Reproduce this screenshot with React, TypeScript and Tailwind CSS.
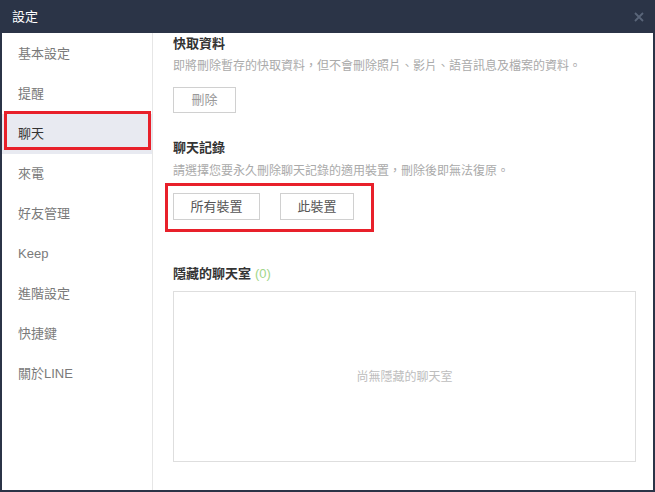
import React from "react";

const menu = ["基本設定", "提醒", "聊天", "來電", "好友管理", "Keep", "進階設定", "快捷鍵", "關於LINE"];

export default function App() {
  const selected = "聊天";

  return (
    <div
      className="relative w-[655px] h-[492px] bg-[#2b3447] flex flex-col overflow-hidden"
      style={{ fontFamily: '"Liberation Sans", "Noto Sans CJK TC", sans-serif' }}
    >
      {/* 標題列 */}
      <div className="h-[33px] flex items-center justify-between pl-3 pr-[10px] shrink-0">
        <span className="text-[13px] text-white">設定</span>
        <svg width="10" height="10" viewBox="0 0 10 10" className="mr-[1px]">
          <path d="M1 1 L9 9 M9 1 L1 9" stroke="#5a6579" strokeWidth="1.8" />
        </svg>
      </div>

      {/* 本體 */}
      <div className="flex-1 flex mx-[2px] mb-[2px] bg-white min-h-0">
        {/* 左側選單 */}
        <div className="w-[151px] shrink-0 border-r border-[#e6e6e6] flex flex-col pt-[1px]">
          {menu.map((item) => (
            <div
              key={item}
              className={`h-10 flex items-center pl-4 text-[13px] ${
                item === selected ? "bg-[#e8eaf1] text-[#333]" : "text-[#7a7a7a]"
              }`}
            >
              {item}
            </div>
          ))}
        </div>

        {/* 右側內容 */}
        <div className="flex-1 pl-5 pr-[17px] flex flex-col">
          <div className="h-5 mt-[1px] flex items-center text-[13px] font-bold text-[#333]">快取資料</div>
          <div className="h-[18px] mt-[3px] flex items-center text-[12px] text-[#aaaaaa]">
            即將刪除暫存的快取資料，但不會刪除照片、影片、語音訊息及檔案的資料。
          </div>
          <button className="mt-3 w-[63px] h-[26px] border border-[#d0d0d0] bg-white text-[13px] text-[#999]">
            刪除
          </button>

          <div className="h-5 mt-[25px] flex items-center text-[13px] font-bold text-[#333]">聊天記錄</div>
          <div className="h-[18px] mt-1 flex items-center text-[12px] text-[#aaaaaa]">
            請選擇您要永久刪除聊天記錄的適用裝置，刪除後即無法復原。
          </div>
          <div className="mt-[13px] flex gap-5">
            <button className="w-[87px] h-[27px] border border-[#d0d0d0] bg-white text-[13px] text-[#555]">
              所有裝置
            </button>
            <button className="w-[74px] h-[27px] border border-[#d0d0d0] bg-white text-[13px] text-[#555]">
              此裝置
            </button>
          </div>

          <div className="h-5 mt-[44px] flex items-center text-[13px] font-bold text-[#333]">
            隱藏的聊天室
            <span className="ml-1 font-normal text-[#9fd68a]">(0)</span>
          </div>
          <div className="mt-[7px] h-[171px] border border-[#dedede] flex items-center justify-center text-[12px] text-[#bdbdbd]">
            尚無隱藏的聊天室
          </div>
        </div>
      </div>

      {/* 標註框 */}
      <div className="absolute left-[4px] top-[111px] w-[147px] h-[39px] border-[3px] border-[#e8202a] pointer-events-none" />
      <div className="absolute left-[165px] top-[183px] w-[209px] h-[49px] border-[3px] border-[#e8202a] pointer-events-none" />
    </div>
  );
}
